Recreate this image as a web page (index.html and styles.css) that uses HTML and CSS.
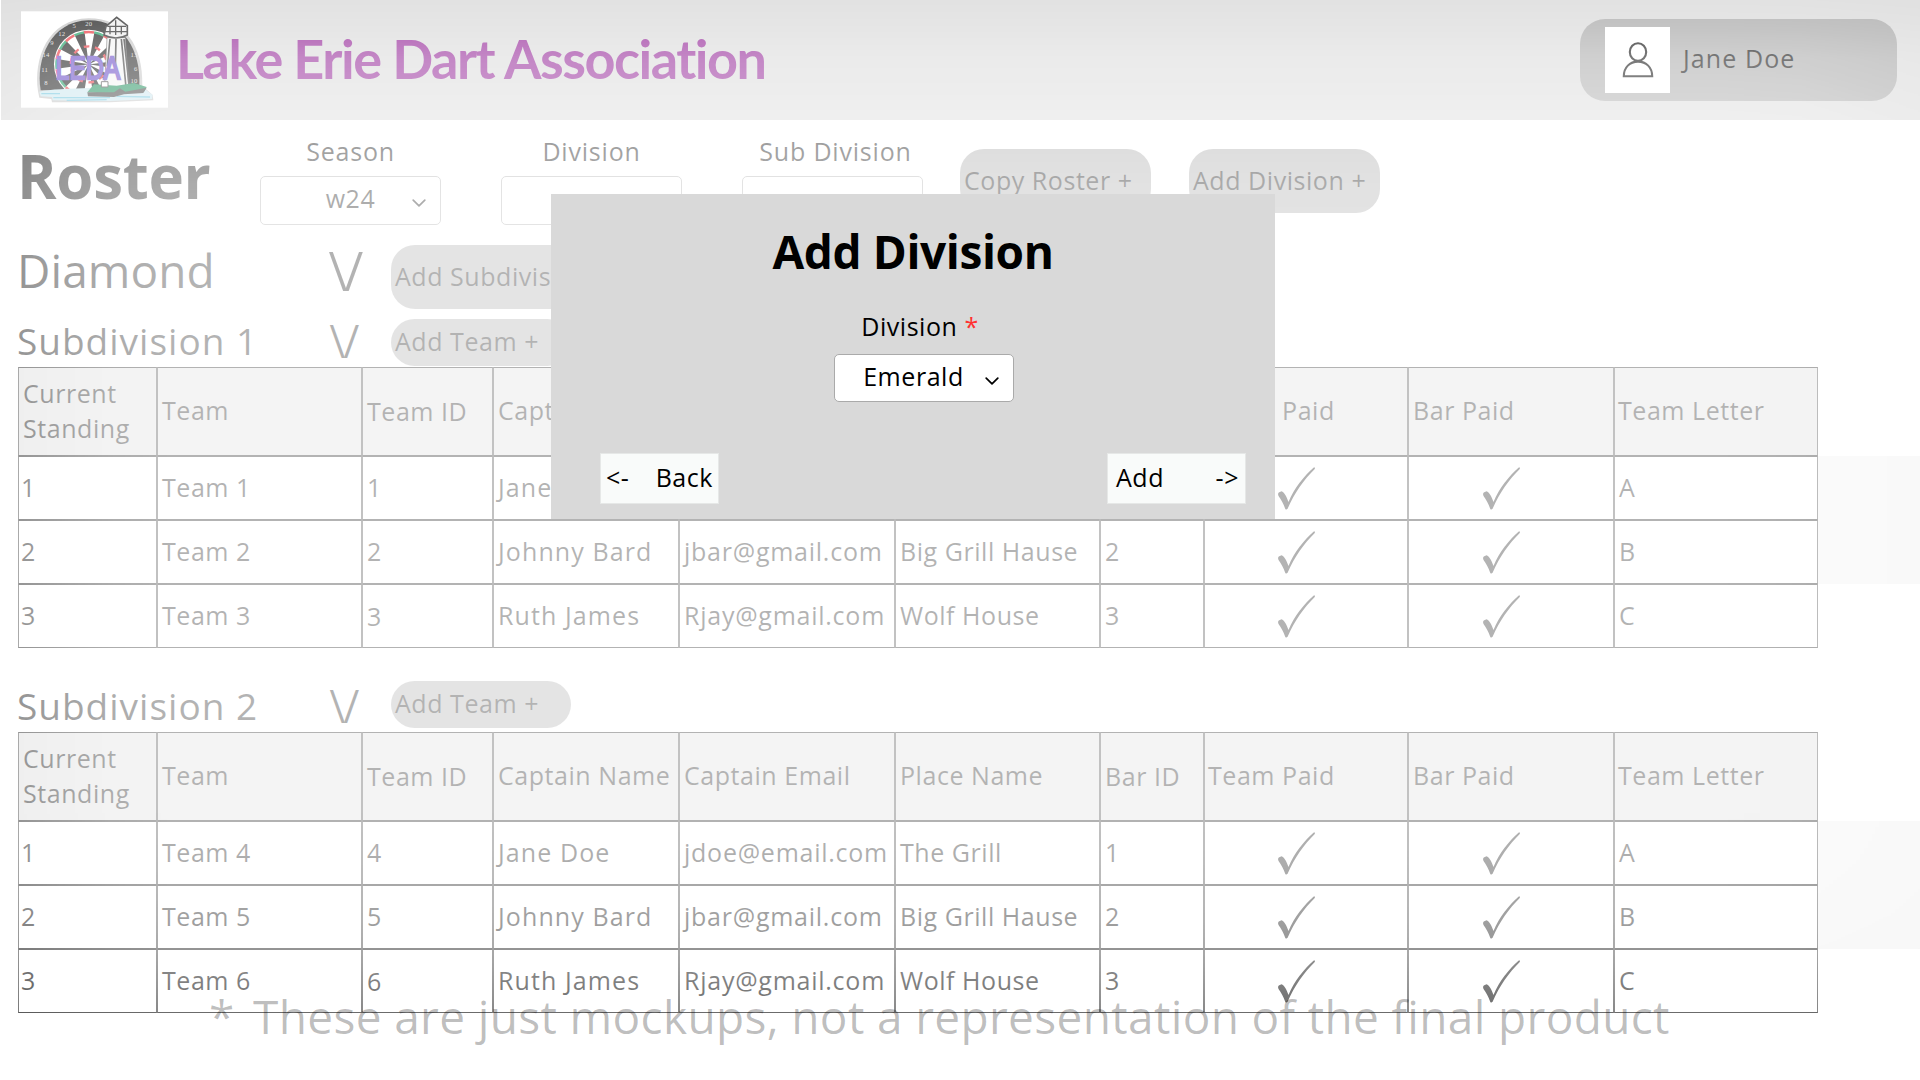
FILE: index.html
```
<!DOCTYPE html>
<html lang="en">
<head>
<meta charset="utf-8">
<title>Lake Erie Dart Association - Roster</title>
<link rel="stylesheet" href="styles.css">
</head>
<body>
<svg class="defs" aria-hidden="true">
  <symbol id="check" viewBox="0 0 37 43"><path d="M36.3 0L37 1.8C26 12.5 16.500 26 9.600 41.800Q8.400 43.200 7.300 42C5.500 37 3.200 32.500.7 29.300Q-.6 26.800.8 25.600Q2.400 24.600 3.800 24.200C6.500 25.600 8.800 30 10.500 35C16 21.500 26 9 36.300 0Z"/></symbol>
  <symbol id="chevron" viewBox="0 0 14 8"><path d="M1.200 1.200L7 6.800L12.800 1.200" fill="none" stroke="currentColor" stroke-width="1.700" stroke-linecap="round" stroke-linejoin="round"/></symbol>
</svg>

<div class="page">
  <header class="topbar">
    <svg class="logo" viewBox="33 35 441 289">
      <rect x="33" y="35" width="441" height="289" fill="#fff"/>
      <path d="M84 274C70 180 112 58 236 56C345 56 400 140 397 258L428 286L430 302L300 308L126 308L124 298L88 294Z" fill="#c4c4c4"/>
      <path d="M92 272C76 180 122 64 236 62C340 62 392 150 388 256L350 272Z" fill="#1c1c1c"/>
      <circle cx="236" cy="194" r="104" fill="#fff"/>
      <circle cx="236" cy="194" r="50" fill="none" stroke-width="92" stroke="#1c1c1c" stroke-dasharray="15.700 15.700" stroke-dashoffset="8"/>
      <circle cx="236" cy="194" r="97" fill="none" stroke="#1d9e63" stroke-width="7" stroke-dasharray="30.500 30.500" stroke-dashoffset="15"/>
      <circle cx="236" cy="194" r="97" fill="none" stroke="#e8343c" stroke-width="8" stroke-dasharray="30.500 30.500" stroke-dashoffset="-15"/>
      <circle cx="236" cy="194" r="54" fill="none" stroke="#e8343c" stroke-width="7" stroke-dasharray="17 17"/>
      <g fill="#ddd" font-family="Liberation Serif, serif" font-size="20" text-anchor="middle">
        <text x="236" y="79">20</text><text x="193" y="86">5</text><text x="155" y="110">12</text><text x="126" y="137">9</text><text x="108" y="173">14</text><text x="104" y="216">11</text><text x="108" y="256">8</text><text x="372" y="172">13</text><text x="377" y="215">6</text><text x="372" y="249">10</text>
      </g>
      <path d="M88 276C150 262 330 266 396 262L428 286L426 298L300 304L128 302L126 292L92 290Z" fill="#c9e6ee"/>
      <path d="M94 282H150M130 294H300M320 290L420 292M170 302L290 300" stroke="#6cc3dc" stroke-width="4"/>
      <path d="M291 114L284 262L356 266L346 114Z" fill="#f4f4f4" stroke="#555" stroke-width="2"/>
      <path d="M300 118L292 200M318 118L316 200M334 118L348 262M342 118L358 262" stroke="#333" stroke-width="5"/>
      <path d="M282 106L288 80L320 53L352 78L352 106Q318 124 282 106Z" fill="#eee" stroke="#222" stroke-width="5"/>
      <path d="M292 80H348M300 82V104M317 62V106M334 82V104M284 96H352" stroke="#222" stroke-width="4" fill="none"/>
      <path d="M232 278L252 254L320 258L372 250L410 262L402 276L330 278L312 284Z" fill="#168a55"/>
      <path d="M232 278L312 278L330 266L346 276L410 264L400 280L342 284L312 292L234 290Z" fill="#3b3b3b"/>
      <path d="M274 246H294V262H274Z" fill="#fff" stroke="#444" stroke-width="3"/>
      <text x="137" y="239" textLength="194" lengthAdjust="spacingAndGlyphs" font-family="Liberation Sans, sans-serif" font-size="94" fill="#7c62d8" stroke="#6446c4" stroke-width="7">LEDA</text>
    </svg>
    <h1 class="brand">Lake Erie Dart Association</h1>
    <div class="user">
      <span class="avatar">
        <svg viewBox="0 0 32 42"><ellipse cx="16" cy="10" rx="8.200" ry="8.800"/><path d="M1.800 34.200C1.800 25.500 7.800 19.600 16 19.600S30.200 25.500 30.200 34.200Z"/></svg>
      </span>
      <span>Jane Doe</span>
    </div>
  </header>

  <section class="toolbar">
    <h2 class="page-title">Roster</h2>
    <div class="field"><label>Season</label><div class="select">w24<svg><use href="#chevron"/></svg></div></div>
    <div class="field"><label>Division</label><div class="select"></div></div>
    <div class="field"><label class="wide">Sub Division</label><div class="select"></div></div>
    <div class="actions"><div class="pill tall">Copy Roster +</div><div class="pill tall">Add Division +</div></div>
  </section>

  <section class="group division">
    <h3>Diamond</h3><span class="toggle">\/</span><div class="pill tall">Add Subdivision +</div>
  </section>

  <section class="group sub">
    <h4>Subdivision 1</h4><span class="toggle">\/</span><div class="pill">Add Team +</div>
  </section>
  <div class="table-band">
    <table class="roster">
      <colgroup><col class="c-standing"><col class="c-team"><col class="c-id"><col class="c-name"><col class="c-email"><col class="c-team"><col class="c-bar"><col class="c-paid"><col class="c-barpaid"><col class="c-letter"></colgroup>
      <tr><th>Current Standing</th><th>Team</th><th class="low">Team ID</th><th>Captain Name</th><th>Captain Email</th><th>Place Name</th><th class="low">Bar ID</th><th>Team Paid</th><th>Bar Paid</th><th>Team Letter</th></tr>
      <tr><td>1</td><td>Team 1</td><td>1</td><td>Jane Doe</td><td>jdoe@email.com</td><td>The Grill</td><td>1</td><td class="paid"><svg><use href="#check"/></svg></td><td class="paid"><svg><use href="#check"/></svg></td><td>A</td></tr>
      <tr><td>2</td><td>Team 2</td><td>2</td><td>Johnny Bard</td><td>jbar@gmail.com</td><td>Big Grill Hause</td><td>2</td><td class="paid"><svg><use href="#check"/></svg></td><td class="paid"><svg><use href="#check"/></svg></td><td>B</td></tr>
      <tr><td>3</td><td>Team 3</td><td class="low">3</td><td>Ruth James</td><td>Rjay@gmail.com</td><td>Wolf House</td><td>3</td><td class="paid"><svg><use href="#check"/></svg></td><td class="paid"><svg><use href="#check"/></svg></td><td>C</td></tr>
    </table>
    <div class="stripe"></div>
  </div>

  <section class="group sub second">
    <h4>Subdivision 2</h4><span class="toggle">\/</span><div class="pill">Add Team +</div>
  </section>
  <div class="table-band">
    <table class="roster">
      <colgroup><col class="c-standing"><col class="c-team"><col class="c-id"><col class="c-name"><col class="c-email"><col class="c-team"><col class="c-bar"><col class="c-paid"><col class="c-barpaid"><col class="c-letter"></colgroup>
      <tr><th>Current Standing</th><th>Team</th><th class="low">Team ID</th><th>Captain Name</th><th>Captain Email</th><th>Place Name</th><th class="low">Bar ID</th><th>Team Paid</th><th>Bar Paid</th><th>Team Letter</th></tr>
      <tr><td>1</td><td>Team 4</td><td>4</td><td>Jane Doe</td><td>jdoe@email.com</td><td>The Grill</td><td>1</td><td class="paid"><svg><use href="#check"/></svg></td><td class="paid"><svg><use href="#check"/></svg></td><td>A</td></tr>
      <tr><td>2</td><td>Team 5</td><td>5</td><td>Johnny Bard</td><td>jbar@gmail.com</td><td>Big Grill Hause</td><td>2</td><td class="paid"><svg><use href="#check"/></svg></td><td class="paid"><svg><use href="#check"/></svg></td><td>B</td></tr>
      <tr><td>3</td><td>Team 6</td><td class="low">6</td><td>Ruth James</td><td>Rjay@gmail.com</td><td>Wolf House</td><td>3</td><td class="paid"><svg><use href="#check"/></svg></td><td class="paid"><svg><use href="#check"/></svg></td><td>C</td></tr>
    </table>
    <div class="stripe"></div>
  </div>
</div>

<div class="veil"></div>

<p class="notice"><span>*</span>These are just mockups, not a representation of the final product</p>

<div class="modal">
  <h2>Add Division</h2>
  <label>Division <span class="required">*</span></label>
  <div class="select">Emerald<svg><use href="#chevron"/></svg></div>
  <div class="modal-actions">
    <div class="btn back"><span>&lt;-</span><span>Back</span></div>
    <div class="btn add"><span>Add</span><span>-&gt;</span></div>
  </div>
</div>
</body>
</html>
```
FILE: styles.css
```
* { box-sizing: border-box; margin: 0; padding: 0; }

body {
  position: relative;
  width: 1920px;
  height: 1080px;
  overflow: hidden;
  background: #fff;
  color: #000;
  font-family: "Open Sans", sans-serif;
  font-size: 25px;
  font-weight: 400;
  line-height: 35px;
  letter-spacing: 0.55px;
}

.defs { position: absolute; width: 0; height: 0; }

.page { height: 1080px; }

/* Header */
.topbar {
  display: flex;
  align-items: flex-start;
  height: 120px;
  margin-left: 1px;
  padding-left: 20px;
  background: #d9d9d9;
}
.logo { width: 147px; height: 97px; margin-top: 11px; }
.brand {
  margin: 21px 0 0 8px;
  color: #8f1d93;
  font-family: Lato, sans-serif;
  font-size: 54px;
  font-weight: 700;
  line-height: 76px;
  letter-spacing: -1.5px;
  white-space: nowrap;
}
.user {
  display: flex;
  align-items: center;
  width: 317px;
  height: 82px;
  margin: 19px 23px 0 auto;
  padding-left: 25px;
  border-radius: 25px;
  background: #a6a6a6;
}
.avatar {
  display: flex;
  justify-content: center;
  width: 65px;
  height: 66px;
  margin-right: 13px;
  padding-top: 15px;
  background: #fff;
}
.avatar svg { width: 32px; height: 42px; fill: none; stroke: #000; stroke-width: 2.1; }
.user > span:last-child { padding-bottom: 4px; letter-spacing: 1.1px; }

/* Filters */
.toolbar { display: flex; height: 112px; padding-left: 18px; }
.page-title {
  width: 242px;
  margin-top: 1px;
  font-size: 60px;
  font-weight: 700;
  line-height: 110px;
  letter-spacing: -0.3px;
  text-indent: -1px;
}
.field { width: 181px; margin-right: 60px; padding-top: 14px; text-align: center; }
.field label { display: block; height: 42px; letter-spacing: 0.8px; white-space: nowrap; }
.field .wide { padding-left: 6px; }
.select {
  position: relative;
  height: 49px;
  padding-bottom: 3px;
  border: 1px solid #aaa;
  border-radius: 5px;
  background: #fff;
  line-height: 43px;
  text-align: center;
}
.select svg { position: absolute; right: 14px; top: 22px; width: 14px; height: 8px; }
.actions { display: flex; gap: 38px; padding-top: 29px; margin-left: -23px; }

.pill {
  width: 180px;
  height: 47px;
  padding-left: 4px;
  border-radius: 24px;
  background: #a6a6a6;
  line-height: 45px;
  white-space: nowrap;
}
.pill.tall { width: 191px; height: 64px; line-height: 62px; }

/* Division and subdivision headings */
.group { display: grid; grid-template-columns: 311px 62px 300px; padding-left: 18px; }
.group h3 { font-size: 46px; font-weight: 400; line-height: 77px; letter-spacing: 0.1px; text-indent: -1px; }
.group h4 { font-size: 37px; font-weight: 400; line-height: 54px; letter-spacing: 1px; text-indent: -1px; white-space: nowrap; }
.toggle { font-size: 45px; font-weight: 400; font-stretch: 75%; line-height: 54px; letter-spacing: -2.5px; }
.division { height: 82px; }
.division .toggle { margin-left: -1px; font-size: 54px; line-height: 77px; letter-spacing: -4px; }
.division .pill { width: 240px; margin-top: 13px; }
.sub { height: 53px; }
.sub .pill { margin-top: 5px; }
.second { height: 53px; margin-top: 31px; }
.second .pill { margin-top: 2px; }

/* Roster tables */
.table-band { display: flex; padding-left: 18px; }
.roster { width: 1800px; table-layout: fixed; border-collapse: separate; border-spacing: 0; }
.c-standing { width: 139px; }
.c-team { width: 205px; }
.c-id { width: 131px; }
.c-name { width: 186px; }
.c-email { width: 216px; }
.c-bar { width: 104px; }
.c-paid { width: 204px; }
.c-barpaid { width: 206px; }
.c-letter { width: 204px; }
.roster tr { height: 64px; }
.roster tr:first-child { height: 89px; }
.roster th,
.roster td {
  padding: 0 0 2px 4px;
  border: 1px solid #000;
  border-left-color: #333;
  border-right-color: #333;
  font-weight: 400;
  text-align: left;
  vertical-align: middle;
  white-space: nowrap;
}
.roster th { background: #d9d9d9; }
.roster th:first-child { white-space: normal; }
.roster th:nth-child(8),
.roster th:nth-child(10) { padding-left: 3px; }
.roster td:first-child { padding-left: 2px; }
.roster td:nth-child(4) { letter-spacing: 1.1px; }
.roster td:nth-child(5) { letter-spacing: 0.75px; }
.roster .low { padding-bottom: 0; }
.roster .paid { padding: 0 0 0 73px; }
.roster .paid + .paid { padding-left: 74px; }
.paid svg { display: block; width: 37px; height: 43px; }
.stripe { flex: 1; height: 128px; margin-top: 89px; background: #f0f0f0; }

/* White wash over the page, thinner towards the edges */
.veil {
  position: absolute;
  inset: 0;
  background: rgba(255, 255, 255, 0.7);
  -webkit-mask-image:
    linear-gradient(to bottom, rgba(0,0,0,.34) 0, rgba(0,0,0,.47) 25px, rgba(0,0,0,.67) 58px, rgba(0,0,0,.78) 100px, rgba(0,0,0,.83) 120px, rgba(0,0,0,.9) 150px, rgba(0,0,0,.96) 190px, #000 260px, #000 810px, rgba(0,0,0,.97) 860px, rgba(0,0,0,.9) 915px, rgba(0,0,0,.84) 945px, rgba(0,0,0,.72) 980px, rgba(0,0,0,.6) 1012px, rgba(0,0,0,.4) 1080px),
    linear-gradient(to right, rgba(0,0,0,.8) 0, rgba(0,0,0,.9) 60px, rgba(0,0,0,.96) 110px, #000 170px, #000 1720px, rgba(0,0,0,.98) 1800px, rgba(0,0,0,.86) 1920px);
  mask-composite: intersect;
}

.notice {
  position: absolute;
  left: 209px;
  top: 981px;
  display: flex;
  color: rgba(0, 0, 0, 0.26);
  font-size: 46px;
  line-height: 70px;
  letter-spacing: 0.35px;
  white-space: pre;
}
.notice span { width: 44px; }

/* Dialog */
.modal {
  position: absolute;
  left: 551px;
  top: 194px;
  display: flex;
  flex-direction: column;
  align-items: center;
  width: 724px;
  height: 325px;
  background: #d9d9d9;
}
.modal h2 { margin-top: 28px; font-size: 46px; font-weight: 700; line-height: 58px; letter-spacing: -0.4px; }
.modal label { margin: 29px 0 0 14px; line-height: 35px; }
.required { color: #ff3131; }
.modal .select { width: 180px; height: 48px; margin: 10px 0 0 21px; padding-right: 20px; line-height: 42px; }
.modal-actions { display: flex; justify-content: space-between; align-self: stretch; margin-top: 51px; padding: 0 29px 0 49px; }
.btn {
  display: flex;
  justify-content: space-between;
  height: 51px;
  border: 1px solid #e6e8e7;
  background: #f9fbfa;
  line-height: 46px;
}
.back { width: 119px; padding: 0 5px 0 5px; }
.add { width: 139px; padding: 0 6px 0 8px; }
```
